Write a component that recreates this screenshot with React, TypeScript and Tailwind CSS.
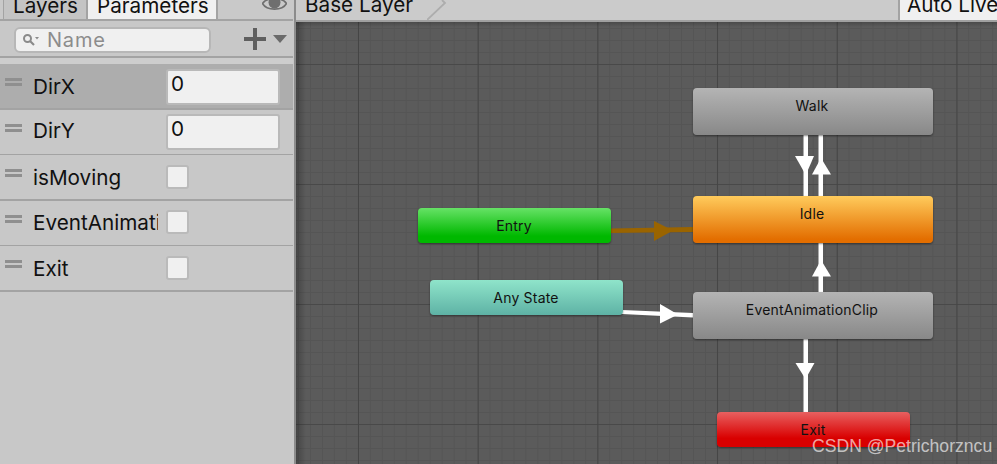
import React from "react";

const font = { fontFamily: "Inter, sans-serif" };

function Handle() {
  return (
    <div className="flex flex-col gap-[2px] w-[17px] ml-[5px] mt-[14px] shrink-0">
      <div className="h-[3px] bg-[#8f8f8f]" />
      <div className="h-[3px] bg-[#8f8f8f]" />
    </div>
  );
}

function Row({ label, kind, selected, h, line, textTop, boxTop }: { label: string; kind: "num" | "check"; selected?: boolean; h: string; line: string; textTop: string; boxTop: string }) {
  return (
    <div className={`flex ${h} ${line} border-[#a3a3a3] ${selected ? "bg-[#adadad]" : ""}`}>
      <Handle />
      <div className={`ml-[11px] w-[125px] shrink-0 overflow-hidden whitespace-nowrap text-[20.7px] leading-[24px] ${textTop} text-[#111]`}>{label}</div>
      {kind === "num" ? (
        <div className={`ml-[8px] ${boxTop} w-[114px] h-[36px] rounded-[3px] bg-[#f0f0f0] border-2 border-[#b9b9b9] pl-[3px] text-[20.7px] leading-[26px] text-[#111]`}>0</div>
      ) : (
        <div className={`ml-[8px] ${boxTop} w-[23px] h-[24px] rounded-[3px] bg-[#f0f0f0] border-2 border-[#bababa]`} />
      )}
    </div>
  );
}

function Node({ label, cls, top, left, w, h }: { label: string; cls: string; top: string; left: string; w: string; h: string }) {
  return (
    <div className={`absolute ${top} ${left} ${w} ${h} pt-[9px] ${cls} rounded-[4px] text-center text-[14px] leading-[18px] text-[#111] tracking-[0.2px] shadow-[0_1px_2px_rgba(0,0,0,0.45)]`}>
      {label}
    </div>
  );
}

export default function App() {
  return (
    <div className="flex w-[997px] h-[464px] overflow-hidden bg-[#c8c8c8]" style={font}>
      {/* left panel */}
      <div className="w-[293px] shrink-0 h-full flex flex-col">
        <div className="h-[21px] shrink-0 flex bg-[#c9c9c9] border-b-[2px] border-[#a3a3a3] text-[20.7px] leading-[24px] text-[#111]">
          <div className="w-[4px] h-full border-r border-[#a3a3a3]" />
          <div className="w-[84px] h-full overflow-hidden bg-[#c4c4c4] border-r-2 border-[#a3a3a3] pl-[9px] whitespace-nowrap"><span className="block -mt-[6px]">Layers</span></div>
          <div className="w-[130px] h-full overflow-hidden bg-[#f0f0f0] border-r-2 border-[#a3a3a3] pl-[9px] whitespace-nowrap"><span className="block -mt-[6px]">Parameters</span></div>
          <div className="flex-1 flex justify-end pr-[6px] h-full overflow-hidden">
            <svg width="25" height="12" viewBox="0 0 25 12">
              <path d="M0.5 3.5C4.5 -3 20.500 -3 24.500 3.500C20.500 11 4.500 11 0.500 3.500Z" fill="none" stroke="#6f6f6f" strokeWidth="1.6" />
              <circle cx="12.5" cy="2.5" r="6" fill="#6f6f6f" />
            </svg>
          </div>
        </div>
        <div className="h-[37px] shrink-0 flex items-start border-b-[2px] border-[#a3a3a3] bg-[#c8c8c8]">
          <div className="ml-[14px] mt-[6px] w-[197px] h-[26px] rounded-[6px] bg-[#f0f0f0] border-2 border-[#b7b7b7] flex items-center">
            <svg width="18" height="14" viewBox="0 0 18 14" className="ml-[6px]">
              <circle cx="5.5" cy="5.5" r="3.5" fill="none" stroke="#8a8a8a" strokeWidth="2" />
              <path d="M8 8L12 12" stroke="#8a8a8a" strokeWidth="2.2" />
              <path d="M13 4H17L15 6.5Z" fill="#8a8a8a" />
            </svg>
            <span className="ml-[7px] text-[20px] leading-none text-[#8c8c8c] tracking-[0.8px]">Name</span>
          </div>
          <svg width="22" height="22" viewBox="0 0 22 22" className="ml-[33px] mt-[7px]">
            <path d="M9 0H13V9H22V13H13V22H9V13H0V9H9Z" fill="#5f5f5f" />
          </svg>
          <svg width="14" height="8" viewBox="0 0 14 8" className="ml-[7px] mt-[14px]">
            <path d="M0 0H14L7 8Z" fill="#6a6a6a" />
          </svg>
        </div>
        <div className="h-[6px] shrink-0 bg-[#cdcdcd]" />
        <Row label="DirX" kind="num" selected h="h-[46px]" line="border-b-2" textTop="pt-[11px]" boxTop="mt-[5px]" />
        <Row label="DirY" kind="num" h="h-[45px]" line="border-b" textTop="pt-[9px]" boxTop="mt-[4px]" />
        <Row label="isMoving" kind="check" h="h-[46px]" line="border-b-2" textTop="pt-[11px]" boxTop="mt-[10px]" />
        <Row label="EventAnimation" kind="check" h="h-[45px]" line="border-b" textTop="pt-[10px]" boxTop="mt-[9px]" />
        <Row label="Exit" kind="check" h="h-[46px]" line="border-b-2" textTop="pt-[11px]" boxTop="mt-[10px]" />
      </div>
      <div className="w-[1px] shrink-0 bg-[#c8c8c8]" />
      <div className="w-[2px] shrink-0 bg-[#8c8c8c]" />

      {/* right side */}
      <div className="flex-1 h-full flex flex-col relative min-w-0">
        <div className="h-[22px] shrink-0 flex bg-[#cbcbcb] border-b-[2px] border-[#a0a0a0] text-[20.7px] leading-[24px] text-[#111] overflow-hidden">
          <div className="pl-[9px] w-[131px] whitespace-nowrap"><span className="block -mt-[7px]">Base Layer</span></div>
          <svg width="20" height="20" viewBox="0 0 20 20" className="shrink-0">
            <path d="M0 20L18 3L15 0" fill="none" stroke="#adadad" strokeWidth="1.8" />
          </svg>
          <div className="flex-1" />
          <div className="w-[99px] bg-[#f0f0f0] border-l-2 border-[#a3a3a3] pl-[7px] whitespace-nowrap overflow-hidden"><span className="block -mt-[7px]">Auto Live</span></div>
        </div>

        <div className="flex-1 relative overflow-hidden bg-[#5b5b5b] [background-image:linear-gradient(90deg,#454545_1px,transparent_1px),linear-gradient(#494949_1px,transparent_1px),linear-gradient(90deg,#555555_1px,transparent_1px),linear-gradient(#555555_1px,transparent_1px)] [background-size:119.7px_120px,120px_120px,11.97px_12px,12px_12px] [background-position:62px_0,0_42px,2px_0,0_6px]">
          <div className="absolute inset-y-0 left-0 w-[10px] bg-gradient-to-r from-[#00000040] to-transparent" />
          <div className="absolute inset-x-0 top-0 h-[5px] bg-gradient-to-b from-[#00000030] to-transparent" />

          <svg className="absolute left-0 top-0" width="701" height="442" viewBox="296 22 701 442">
            <g fill="#ffffff" stroke="none">
              <path d="M803.5 135H808V196H803.5Z" />
              <path d="M795 156H814L805.8 175Z" />
              <path d="M818.5 135H823V196H818.5Z" />
              <path d="M812 174.500H831L821 158Z" />
              <path d="M818.500 243H823V292H818.500Z" />
              <path d="M812 276.500H831L821 260Z" />
              <path d="M803.500 339H808V412H803.500Z" />
              <path d="M795.500 363H814.500L805.500 379Z" />
              <path d="M622 310L693 313V317.500L622 314Z" />
              <path d="M660 304L660 323.500L678 314.500Z" />
            </g>
            <g fill="#9a6400">
              <path d="M611 228.500L693 227V232L611 233Z" />
              <path d="M654 221L654 241L673 230.500Z" />
            </g>
          </svg>

          <Node label="Walk" cls="pr-[2px] bg-[linear-gradient(#b4b4b4,#888888)]" left="left-[397px]" top="top-[66px]" w="w-[240px]" h="h-[47px]" />
          <Node label="Idle" cls="pr-[2px] bg-[linear-gradient(#ffcb5c,#e36e00_92%)]" left="left-[397px]" top="top-[174px]" w="w-[240px]" h="h-[47px]" />
          <Node label="EventAnimationClip" cls="pr-[2px] bg-[linear-gradient(#b4b4b4,#888888)]" left="left-[397px]" top="top-[270px]" w="w-[240px]" h="h-[47px]" />
          <Node label="Entry" cls="pr-[1px] bg-[linear-gradient(#66e266,#00b800_80%)]" left="left-[122px]" top="top-[186px]" w="w-[193px]" h="h-[35px]" />
          <Node label="Any State" cls="pr-[1px] bg-[linear-gradient(#8fe4ca,#5eb2a5)]" left="left-[134px]" top="top-[258px]" w="w-[193px]" h="h-[35px]" />
          <Node label="Exit" cls="pr-[1px] bg-[linear-gradient(#e86060,#d90000_75%)]" left="left-[421px]" top="top-[390px]" w="w-[193px]" h="h-[35px]" />
        </div>

        <div className="absolute left-[516px] top-[436px] whitespace-nowrap text-[17.6px] leading-[20px] text-[#ffffffa6]" style={{ fontFamily: '"Liberation Sans", sans-serif' }}>
          CSDN @Petrichorzncu
        </div>
      </div>
    </div>
  );
}
